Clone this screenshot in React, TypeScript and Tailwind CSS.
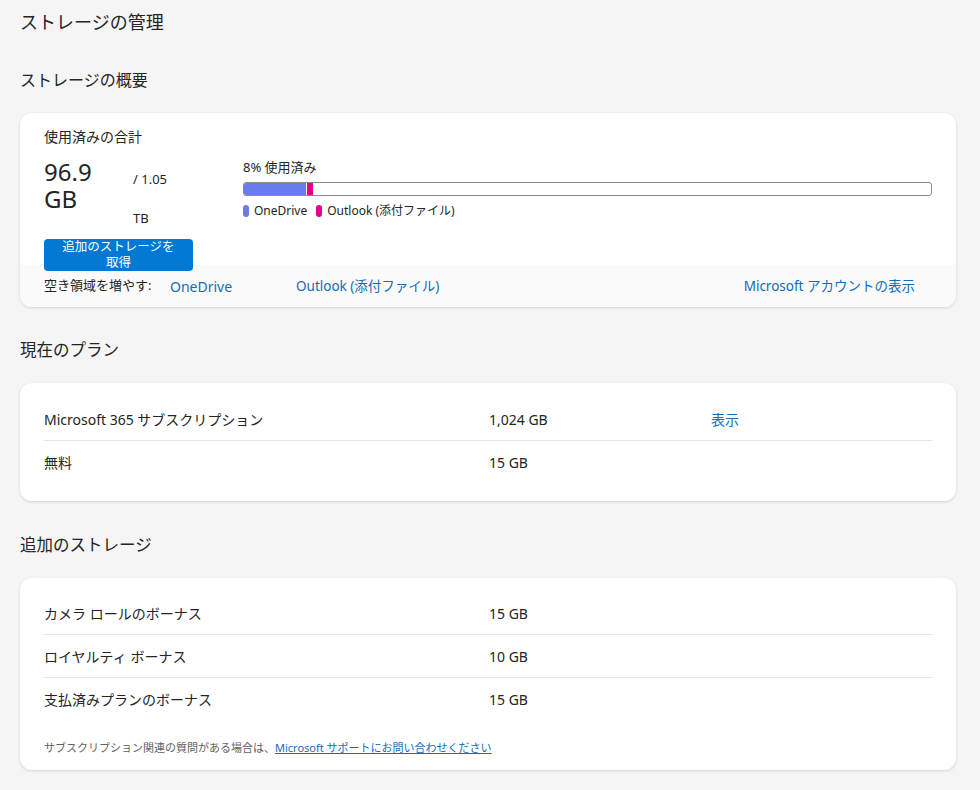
import React from 'react';

const font = { fontFamily: '"Noto Sans", "Noto Sans CJK JP", sans-serif' };

const Row: React.FC<{ label: string; size: string; action?: string; last?: boolean }> = ({ label, size, action, last }) => (
  <div className={`flex items-center h-[43px] text-[14px] text-[#242424] ${last ? '' : 'border-b border-[#e5e5e5]'}`}>
    <div className="w-[445px]">{label}</div>
    <div className="w-[222px]">{size}</div>
    {action && <a className="text-[#0f6cbd] cursor-pointer">{action}</a>}
  </div>
);

const App: React.FC = () => {
  return (
    <div className="min-h-[790px] bg-[#f5f5f5] px-5 pt-[8px] pb-4 text-[#242424]" style={font}>
      <h1 className="text-[18px] leading-[28px] font-normal">ストレージの管理</h1>

      <h2 className="mt-[32px] text-[16px] leading-[24px] font-normal">ストレージの概要</h2>

      {/* Overview card */}
      <div className="mt-[21px] w-[936px] bg-white rounded-xl shadow-[0_1px_3px_rgba(0,0,0,0.14)] overflow-hidden">
        <div className="px-6 pt-[14px]">
          <div className="text-[14px] leading-[20px]">使用済みの合計</div>
          <div className="flex mt-[11px]">
            <div className="w-[199px] flex-shrink-0">
              <div className="flex">
                <div className="w-[89px] text-[24px] leading-[27px]">96.9<br />GB</div>
                <div className="text-[13px] pt-[12px]">
                  <div className="leading-[18px]">/ 1.05</div>
                  <div className="leading-[18px] mt-[21px]">TB</div>
                </div>
              </div>
              <button className="relative z-10 mt-[12px] w-[149px] h-[32px] rounded bg-[#0078d4] text-white text-[12.5px] leading-[16px]">
                追加のストレージを<br />取得
              </button>
            </div>
            <div className="flex-1">
              <div className="text-[13px] leading-[18px]">8% 使用済み</div>
              <div className="mt-[6px] h-[14px] border border-[#8a8a8a] rounded-[3px] flex overflow-hidden">
                <div className="w-[62px] bg-[#6a7ced]" />
                <div className="w-[1px] bg-white" />
                <div className="w-[6px] bg-[#e3008c]" />
              </div>
              <div className="mt-[7px] flex items-center gap-[9px] text-[12px] leading-[16px]">
                <span className="flex items-center gap-[5px]">
                  <span className="inline-block w-[6px] h-[12px] rounded-full bg-[#6a7ced]" />
                  OneDrive
                </span>
                <span className="flex items-center gap-[5px]">
                  <span className="inline-block w-[6px] h-[12px] rounded-full bg-[#e3008c]" />
                  Outlook (添付ファイル)
                </span>
              </div>
            </div>
          </div>
        </div>
        <div className="-mt-[8px] bg-[#fafafa] h-[42px] px-6 pr-[41px] flex items-center text-[13px]">
          <span className="w-[126px]">空き領域を増やす:</span>
          <a className="w-[126px] text-[14px] text-[#0f6cbd] cursor-pointer">OneDrive</a>
          <a className="text-[13.5px] text-[#0f6cbd] cursor-pointer">Outlook (添付ファイル)</a>
          <a className="ml-auto text-[13.5px] text-[#0f6cbd] cursor-pointer">Microsoft アカウントの表示</a>
        </div>
      </div>

      <h2 className="mt-[31px] text-[16.5px] leading-[24px] font-normal">現在のプラン</h2>

      {/* Plan card */}
      <div className="mt-[21px] w-[936px] bg-white rounded-xl shadow-[0_1px_3px_rgba(0,0,0,0.14)] px-6 pt-[15px] pb-[17px]">
        <Row label="Microsoft 365 サブスクリプション" size="1,024 GB" action="表示" />
        <Row label="無料" size="15 GB" last />
      </div>

      <h2 className="mt-[32px] text-[16.5px] leading-[24px] font-normal">追加のストレージ</h2>

      {/* Additional storage card */}
      <div className="mt-[21px] w-[936px] bg-white rounded-xl shadow-[0_1px_3px_rgba(0,0,0,0.14)] px-6 pt-[14px] pb-[14px]">
        <Row label="カメラ ロールのボーナス" size="15 GB" />
        <Row label="ロイヤルティ ボーナス" size="10 GB" />
        <Row label="支払済みプランのボーナス" size="15 GB" last />
        <div className="mt-[19px] text-[11px] leading-[16px] text-[#616161]">
          サブスクリプション関連の質問がある場合は、
          <a className="text-[#0f6cbd] underline cursor-pointer">Microsoft サポートにお問い合わせください</a>
        </div>
      </div>
    </div>
  );
};

export default App;
